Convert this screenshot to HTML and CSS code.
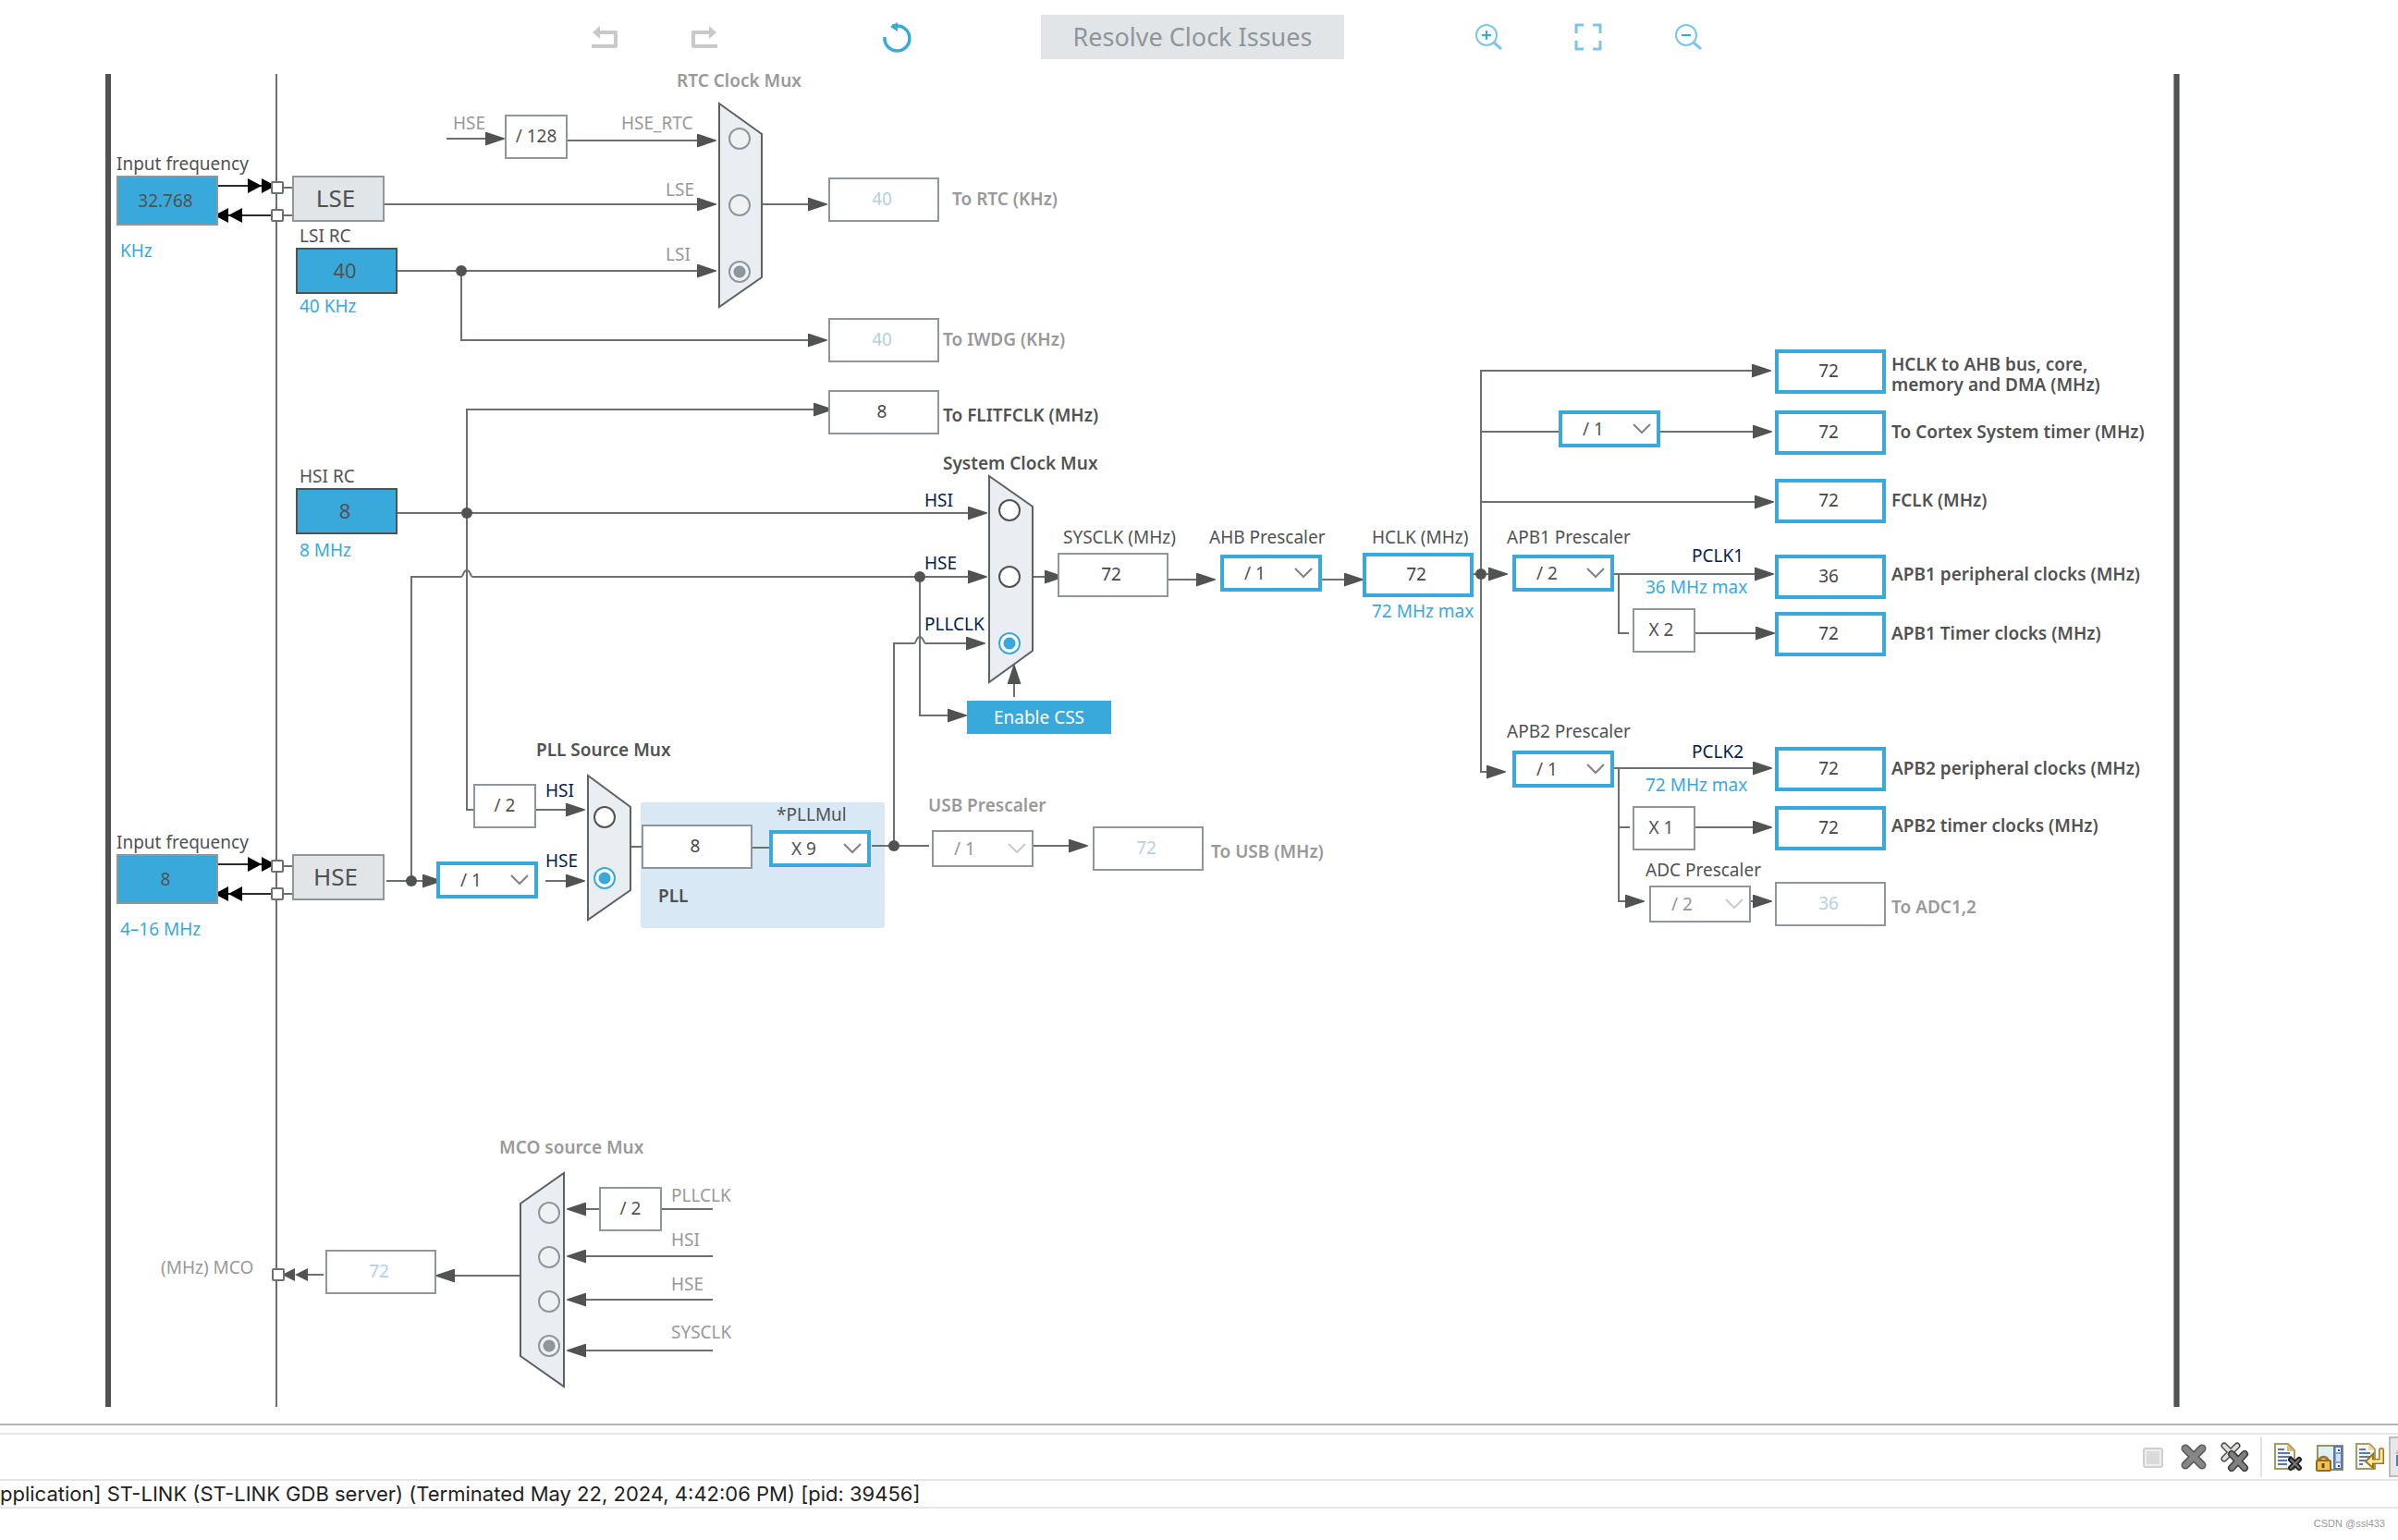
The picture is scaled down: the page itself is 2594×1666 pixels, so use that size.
FILE: index.html
```html
<!DOCTYPE html>
<html lang="en">
<head>
<meta charset="utf-8">
<title>Clock Configuration</title>
<link rel="stylesheet" href="styles.css">
</head>
<body>
<header class="toolbar">
  <div class="tools tools-left">
    <button class="tool" type="button" aria-label="Undo" disabled>
      <svg viewBox="0 0 40 40"><path d="M6 30H32V15H14" fill="none" stroke="#c9c9c9" stroke-width="4" stroke-linejoin="round"/><path d="M7 15L15 8V22z" fill="#c9c9c9"/></svg>
    </button>
    <button class="tool" type="button" aria-label="Redo" disabled>
      <svg viewBox="0 0 40 40"><path d="M34 30H8V15H26" fill="none" stroke="#c9c9c9" stroke-width="4" stroke-linejoin="round"/><path d="M33 15L25 8V22z" fill="#c9c9c9"/></svg>
    </button>
    <button class="tool tool-refresh" type="button" aria-label="Reset">
      <svg viewBox="0 0 40 40"><path d="M7 20A13.500 13.500 0 1 0 20 8H15" fill="none" stroke="#39a9dc" stroke-width="3.500"/><path d="M13 9L21 4V14z" fill="#39a9dc"/></svg>
    </button>
  </div>
  <button class="resolve" type="button" disabled>Resolve Clock Issues</button>
  <div class="tools tools-right">
    <button class="tool" type="button" aria-label="Zoom in">
      <svg viewBox="0 0 40 40" fill="none" stroke="#7cc5e8" stroke-width="2"><circle cx="18" cy="18" r="11"/><path d="M26 26L34 33" stroke-width="3"/><path d="M18 13V23M13 18H23" stroke="#39a9dc"/></svg>
    </button>
    <button class="tool" type="button" aria-label="Fit to window">
      <svg viewBox="0 0 40 40" fill="none" stroke="#7cc5e8" stroke-width="3"><path d="M7 16V7H15M25 7H33V16M33 24V33H25M15 33H7V24"/></svg>
    </button>
    <button class="tool" type="button" aria-label="Zoom out">
      <svg viewBox="0 0 40 40" fill="none" stroke="#7cc5e8" stroke-width="2"><circle cx="18" cy="18" r="11"/><path d="M26 26L34 33" stroke-width="3"/><path d="M13 18H23" stroke="#39a9dc"/></svg>
    </button>
  </div>
</header>

<main class="board">
<div class="diagram">
  <svg class="wires" viewBox="0 80 2360 1442" aria-hidden="true">
    <defs>
      <marker id="arrow" markerUnits="userSpaceOnUse" markerWidth="21" markerHeight="15" refX="21" refY="7.500" orient="auto"><path d="M0 0L21 7V8L0 15z" fill="#505352"/></marker>
      <marker id="pin" markerUnits="userSpaceOnUse" markerWidth="30" markerHeight="16" refX="28" refY="8" orient="auto"><path d="M0 0L15 8L0 16zM15 0L30 8L15 16z" fill="#000"/></marker>
      <marker id="out" markerUnits="userSpaceOnUse" markerWidth="28" markerHeight="14" refX="28" refY="7" orient="auto"><path d="M0 0L14 7L0 14zM14 0L28 7L14 14z" fill="#505352"/></marker>
    </defs>
    <rect x="114" y="80" width="6" height="1442" fill="#505352"/>
    <rect x="2351" y="80" width="7" height="1442" fill="#8f969c"/>
    <rect x="2352" y="80" width="5" height="1442" fill="#505352"/>
    <path class="wire" d="M299 80V1522"/>
    <rect x="693" y="868" width="264" height="136" rx="2" fill="#d9e8f5"/>

    <g class="wire">
      <path d="M306 203H316M306 233H316M306 937H316M306 967H316"/>
      <path d="M416 221H754M430 293H754M614 152H754M483 150H530M824 221H880"/>
      <path d="M499 293V368H880"/>
      <path d="M881 443H505V876H512M430 555H1050"/>
      <path d="M445 953V624H499C501 624 501 617 505 617S509 624 511 624H1050"/>
      <path d="M418 953H460M580 876H615M590 953H615M682 916H694M814 917H832M943 915H1005M1118 915H1160"/>
      <path d="M967 915V696H989C991 696 991 689 995 689S999 696 1001 696H1048M995 624V774H1028"/>
      <path d="M1097 754V738M1117 624H1130M1264 627H1296M1430 627H1455M1594 621H1612"/>
      <path d="M1612 835H1602V401H1896M1602 467H1686M1796 467H1898M1602 543H1900"/>
      <path d="M1746 621H1900M1751 621V685H1762M1834 685H1900"/>
      <path d="M1746 831H1898M1751 831V975H1760M1751 895H1763M1834 895H1898M1894 975H1898"/>
      <path d="M771 1308H716M648 1308H632M771 1359H632M771 1406H632M771 1461H632M563 1380H490M350 1379H330"/>
    </g>
    <g class="wire-in">
      <path d="M236 201H296"/><path d="M293 233H234"/><path d="M236 935H296"/><path d="M293 967H234"/>
    </g>
    <g class="heads">
      <path d="M530 150H546"/><path d="M750 152H775"/><path d="M750 221H775"/><path d="M750 293H775"/>
      <path d="M870 221H895"/><path d="M870 368H895"/><path d="M880 443H901"/>
      <path d="M1046 555H1068"/><path d="M1046 624H1068"/><path d="M1044 696H1066"/><path d="M1024 774H1046"/>
      <path d="M1097 745V719"/><path d="M450 953H478"/><path d="M610 876H633"/><path d="M610 953H633"/>
      <path d="M1154 915H1177"/><path d="M1126 624H1151"/><path d="M1290 627H1315"/><path d="M1450 627H1475"/><path d="M1608 621H1631"/>
      <path d="M1890 401H1916"/><path d="M1890 467H1917"/><path d="M1894 543H1919"/><path d="M1894 621H1919"/><path d="M1894 685H1920"/>
      <path d="M1604 835H1629"/><path d="M1890 831H1917"/><path d="M1890 895H1917"/><path d="M1755 975H1779"/><path d="M1893 975H1917"/>
      <path d="M640 1308H613"/><path d="M640 1359H613"/><path d="M640 1406H613"/><path d="M640 1461H613"/><path d="M500 1380H471"/>
    </g>
    <path d="M340 1379H305" marker-end="url(#out)"/>
    <g fill="#505352">
      <circle cx="499" cy="293" r="6"/><circle cx="505" cy="555" r="6"/><circle cx="445" cy="953" r="6"/><circle cx="995" cy="624" r="6"/><circle cx="967" cy="915" r="6"/><circle cx="1602" cy="621" r="6"/>
    </g>
    <g class="pins">
      <rect x="294" y="197" width="12" height="12" rx="1"/><rect x="294" y="227" width="12" height="12" rx="1"/>
      <rect x="294" y="931" width="12" height="12" rx="1"/><rect x="294" y="961" width="12" height="12" rx="1"/>
      <rect x="295" y="1373" width="12" height="12" rx="1"/>
    </g>
    <g class="mux">
      <path d="M778 112L824 145V300L778 332z"/>
      <path d="M636 839L682 873V963L636 995z"/>
      <path d="M1070 515L1117 548V704L1070 738z"/>
      <path d="M610 1269L563 1302V1467L610 1500z"/>
    </g>
  </svg>

  <!-- RTC -->
  <b class="text muted" style="--x:732;--y:88">RTC Clock Mux</b>
  <span class="text muted" style="--x:490;--y:134">HSE</span>
  <output class="factor" style="--x:546;--y:124">/ 128</output>
  <span class="text muted" style="--x:672;--y:134">HSE_RTC</span>
  <span class="text muted" style="--x:720;--y:206">LSE</span>
  <span class="text muted" style="--x:720;--y:276">LSI</span>
  <input class="radio" type="radio" name="rtc" aria-label="HSE_RTC" disabled style="--x:788;--y:138">
  <input class="radio" type="radio" name="rtc" aria-label="LSE" disabled style="--x:788;--y:210">
  <input class="radio" type="radio" name="rtc" aria-label="LSI" disabled checked style="--x:788;--y:282">
  <input class="field off" id="rtc" value="40" disabled style="--x:896;--y:192">
  <label class="text muted strong" for="rtc" style="--x:1030;--y:216">To RTC (KHz)</label>
  <input class="field off" id="iwdg" value="40" disabled style="--x:896;--y:344">
  <label class="text muted strong" for="iwdg" style="--x:1020;--y:368">To IWDG (KHz)</label>
  <input class="field" id="flitf" value="8" readonly style="--x:896;--y:422">
  <label class="text strong" for="flitf" style="--x:1020;--y:450">To FLITFCLK (MHz)</label>

  <!-- Oscillators -->
  <label class="text" for="lse-in" style="--x:126;--y:178">Input frequency</label>
  <input class="source" id="lse-in" value="32.768" style="--x:126;--y:190">
  <span class="text hint" style="--x:130;--y:272">KHz</span>
  <button class="osc" type="button" style="--x:316;--y:190">LSE</button>
  <label class="text" for="lsi" style="--x:324;--y:256">LSI RC</label>
  <input class="source internal" id="lsi" value="40" readonly style="--x:320;--y:268">
  <span class="text hint" style="--x:324;--y:332">40 KHz</span>
  <label class="text" for="hsi" style="--x:324;--y:516">HSI RC</label>
  <input class="source internal" id="hsi" value="8" readonly style="--x:320;--y:528">
  <span class="text hint" style="--x:324;--y:596">8 MHz</span>
  <label class="text" for="hse-in" style="--x:126;--y:912">Input frequency</label>
  <input class="source" id="hse-in" value="8" style="--x:126;--y:924">
  <span class="text hint" style="--x:130;--y:1006">4–16 MHz</span>
  <button class="osc" type="button" style="--x:316;--y:924">HSE</button>

  <!-- PLL -->
  <b class="text" style="--x:580;--y:812">PLL Source Mux</b>
  <span class="text signal" style="--x:590;--y:856">HSI</span>
  <span class="text signal" style="--x:590;--y:932">HSE</span>
  <output class="factor" style="--x:512;--y:848">/ 2</output>
  <select class="combo" aria-label="HSE divider" style="--x:472;--y:932"><option>/ 1</option></select>
  <input class="radio" type="radio" name="pll" aria-label="HSI" style="--x:642;--y:872">
  <input class="radio" type="radio" name="pll" aria-label="HSE" checked style="--x:642;--y:938">
  <input class="field" id="pll" value="8" readonly style="--x:694;--y:892">
  <label class="text" for="mul" style="--x:840;--y:882">*PLLMul</label>
  <select class="combo times" id="mul" style="--x:832;--y:898"><option>X 9</option></select>
  <label class="text strong" for="pll" style="--x:712;--y:970">PLL</label>
  <label class="text muted strong" for="usb-div" style="--x:1004;--y:872">USB Prescaler</label>
  <select class="combo" id="usb-div" disabled style="--x:1008;--y:898"><option>/ 1</option></select>
  <input class="field off" id="usb" value="72" disabled style="--x:1182;--y:894">
  <label class="text muted strong" for="usb" style="--x:1310;--y:922">To USB (MHz)</label>

  <!-- System clock -->
  <b class="text" style="--x:1020;--y:502">System Clock Mux</b>
  <span class="text signal" style="--x:1000;--y:542">HSI</span>
  <span class="text signal" style="--x:1000;--y:610">HSE</span>
  <span class="text signal" style="--x:1000;--y:676">PLLCLK</span>
  <input class="radio" type="radio" name="sys" aria-label="HSI" style="--x:1080;--y:540">
  <input class="radio" type="radio" name="sys" aria-label="HSE" style="--x:1080;--y:612">
  <input class="radio" type="radio" name="sys" aria-label="PLLCLK" checked style="--x:1080;--y:684">
  <button class="css-enable" type="button" style="--x:1046;--y:758">Enable CSS</button>
  <label class="text" for="sysclk" style="--x:1150;--y:582">SYSCLK (MHz)</label>
  <input class="field" id="sysclk" value="72" readonly style="--x:1144;--y:598">
  <label class="text" for="ahb" style="--x:1308;--y:582">AHB Prescaler</label>
  <select class="combo" id="ahb" style="--x:1320;--y:600"><option>/ 1</option></select>
  <label class="text" for="hclk" style="--x:1484;--y:582">HCLK (MHz)</label>
  <input class="field live" id="hclk" value="72" style="--x:1474;--y:598">
  <span class="text hint" style="--x:1484;--y:662">72 MHz max</span>

  <!-- Buses -->
  <input class="field live" id="o-hclk" value="72" style="--x:1920;--y:378">
  <label class="text strong two-line" for="o-hclk" style="--x:2046;--y:396">HCLK to AHB bus, core,<br>memory and DMA (MHz)</label>
  <select class="combo" aria-label="Cortex timer divider" style="--x:1686;--y:444"><option>/ 1</option></select>
  <input class="field live" id="cortex" value="72" style="--x:1920;--y:444">
  <label class="text strong" for="cortex" style="--x:2046;--y:468">To Cortex System timer (MHz)</label>
  <input class="field live" id="fclk" value="72" style="--x:1920;--y:518">
  <label class="text strong" for="fclk" style="--x:2046;--y:542">FCLK (MHz)</label>

  <label class="text" for="apb1" style="--x:1630;--y:582">APB1 Prescaler</label>
  <select class="combo" id="apb1" style="--x:1636;--y:600"><option>/ 2</option></select>
  <span class="text signal" style="--x:1830;--y:602">PCLK1</span>
  <span class="text hint" style="--x:1780;--y:636">36 MHz max</span>
  <input class="field live" id="apb1-p" value="36" style="--x:1920;--y:600">
  <label class="text strong" for="apb1-p" style="--x:2046;--y:622">APB1 peripheral clocks (MHz)</label>
  <output class="factor times" style="--x:1766;--y:658">X 2</output>
  <input class="field live" id="apb1-t" value="72" style="--x:1920;--y:662">
  <label class="text strong" for="apb1-t" style="--x:2046;--y:686">APB1 Timer clocks (MHz)</label>

  <label class="text" for="apb2" style="--x:1630;--y:792">APB2 Prescaler</label>
  <select class="combo" id="apb2" style="--x:1636;--y:812"><option>/ 1</option></select>
  <span class="text signal" style="--x:1830;--y:814">PCLK2</span>
  <span class="text hint" style="--x:1780;--y:850">72 MHz max</span>
  <input class="field live" id="apb2-p" value="72" style="--x:1920;--y:808">
  <label class="text strong" for="apb2-p" style="--x:2046;--y:832">APB2 peripheral clocks (MHz)</label>
  <output class="factor times" style="--x:1766;--y:872">X 1</output>
  <input class="field live" id="apb2-t" value="72" style="--x:1920;--y:872">
  <label class="text strong" for="apb2-t" style="--x:2046;--y:894">APB2 timer clocks (MHz)</label>
  <label class="text" for="adc-div" style="--x:1780;--y:942">ADC Prescaler</label>
  <select class="combo" id="adc-div" disabled style="--x:1784;--y:958"><option>/ 2</option></select>
  <input class="field off" id="adc" value="36" disabled style="--x:1920;--y:954">
  <label class="text muted strong" for="adc" style="--x:2046;--y:982">To ADC1,2</label>

  <!-- MCO -->
  <b class="text muted" style="--x:540;--y:1242">MCO source Mux</b>
  <input class="radio" type="radio" name="mco" aria-label="PLLCLK" disabled style="--x:582;--y:1300">
  <input class="radio" type="radio" name="mco" aria-label="HSI" disabled style="--x:582;--y:1348">
  <input class="radio" type="radio" name="mco" aria-label="HSE" disabled style="--x:582;--y:1396">
  <input class="radio" type="radio" name="mco" aria-label="SYSCLK" disabled checked style="--x:582;--y:1444">
  <output class="factor" style="--x:648;--y:1284">/ 2</output>
  <span class="text muted" style="--x:726;--y:1294">PLLCLK</span>
  <span class="text muted" style="--x:726;--y:1342">HSI</span>
  <span class="text muted" style="--x:726;--y:1390">HSE</span>
  <span class="text muted" style="--x:726;--y:1442">SYSCLK</span>
  <label class="text muted" for="mco" style="--x:174;--y:1372">(MHz) MCO</label>
  <input class="field off" id="mco" value="72" disabled style="--x:352;--y:1352">
</div>
</main>

<footer class="console">
  <div class="console-bar">
    <div class="console-tools">
      <button class="icon" type="button" aria-label="Terminate" disabled>
        <svg viewBox="0 0 32 32"><rect x="6" y="7" width="20" height="20" rx="2" fill="#eee" stroke="#cfcfcf" stroke-width="2"/><rect x="9" y="10" width="14" height="14" fill="#dadada"/></svg>
      </button>
      <button class="icon" type="button" aria-label="Remove launch">
        <svg viewBox="0 0 32 32"><path d="M7 7L25 25M25 7L7 25" stroke="#5a5a5a" stroke-width="9" stroke-linecap="round"/><path d="M7 7L25 25M25 7L7 25" stroke="#868686" stroke-width="6" stroke-linecap="round"/></svg>
      </button>
      <button class="icon" type="button" aria-label="Remove all terminated launches">
        <svg viewBox="0 0 32 32"><g stroke-linecap="round"><path d="M5 4L19 18M19 4L5 18" stroke="#4c4c44" stroke-width="7"/><path d="M5 4L19 18M19 4L5 18" stroke="#dcdcdc" stroke-width="4"/><path d="M13 13L27 28M27 13L13 28" stroke="#3c3c3c" stroke-width="8"/><path d="M13 13L27 28M27 13L13 28" stroke="#808080" stroke-width="5"/></g></svg>
      </button>
      <span class="divider"></span>
      <button class="icon" type="button" aria-label="Clear console">
        <svg viewBox="0 0 32 32"><path d="M2 2H16L23 9V29H2z" fill="#f4f8fd" stroke="#a89a5e" stroke-width="2"/><path d="M15 2V10H23z" fill="#e2bd72"/><path d="M5 8H12M5 12H18M5 16H20M5 20H15M5 24H15" stroke="#5a78b8" stroke-width="2"/><path d="M19 19L28 28M28 19L19 28" stroke="#222" stroke-width="6" stroke-linecap="round"/><path d="M19 19L28 28M28 19L19 28" stroke="#777" stroke-width="2" stroke-linecap="round"/></svg>
      </button>
      <button class="icon" type="button" aria-label="Scroll lock">
        <svg viewBox="0 0 32 32"><path d="M4 4H31V30H4z" fill="#dff0fb" stroke="#9c9458" stroke-width="2"/><path d="M22 5H30V29H22z" fill="#8aa4cc" stroke="#5878b0" stroke-width="2"/><path d="M24 6H29V11H24zM24 23H29V28H24z" fill="#fff"/><path d="M26 8H28V10H26zM26 25H28V27H26z" fill="#2c4f94"/><path d="M24 13H29V21H24z" fill="#cfe0f4"/><path d="M6 22V19A5 5 0 0 1 15 19V22" fill="none" stroke="#9a7a28" stroke-width="3"/><rect x="3" y="20" width="15" height="11" rx="1" fill="#eec458" stroke="#9a6a10" stroke-width="2"/><path d="M10 23V28" stroke="#6a4a10" stroke-width="3"/></svg>
      </button>
      <button class="icon" type="button" aria-label="Word wrap">
        <svg viewBox="0 0 32 32"><path d="M2 2H16L22 8V29H2z" fill="#f4f8fd" stroke="#a89a5e" stroke-width="2"/><path d="M15 2V9H22z" fill="#f0d9a8"/><path d="M5 8H12M5 12H17M5 16H17M5 20H12M5 24H9" stroke="#5a78b8" stroke-width="2"/><path d="M29 9V21H16" fill="none" stroke="#a8740c" stroke-width="6" stroke-linecap="round"/><path d="M20 13V28L12 21z" fill="#ffe9a8" stroke="#a8740c" stroke-width="2"/><path d="M29 9V21H17" fill="none" stroke="#ffe9a8" stroke-width="3" stroke-linecap="round"/></svg>
      </button>
    </div>
    <button class="icon pressed" type="button" aria-label="Show console on output">
      <svg viewBox="0 0 32 32"><path d="M12 0V13H5z" fill="#bdbdbd"/><path d="M6 14H20V26H6z" fill="#4a82b8"/></svg>
    </button>
  </div>
  <p class="console-title">pplication] ST-LINK (ST-LINK GDB server) (Terminated May 22, 2024, 4:42:06 PM) [pid: 39456]</p>
  <div class="console-body"><span class="credit">CSDN @ssl433</span></div>
</footer>
</body>
</html>
```
FILE: styles.css
```css
* { box-sizing: border-box; }

body {
  margin: 0;
  min-height: 100vh;
  display: flex;
  flex-direction: column;
  overflow-x: hidden;
  background: #fff;
  color: #505352;
  font: 19px/24px "Noto Sans", sans-serif;
}

button, input, select {
  font: inherit;
  color: inherit;
  margin: 0;
  padding: 0;
  border-radius: 0;
}

/* Toolbar */
.toolbar {
  height: 80px;
  padding-right: 14px;
  display: grid;
  grid-template-columns: 1fr auto 1fr;
  align-items: center;
  column-gap: 136px;
}
.tools { display: flex; gap: 68px; }
.tools-left { justify-content: flex-end; }
.tool {
  width: 40px;
  height: 40px;
  border: 0;
  background: none;
}
.tool svg { display: block; width: 40px; height: 40px; }
.tool-refresh { margin-left: 100px; }
.resolve {
  width: 328px;
  height: 48px;
  border: 0;
  background: #e1e5e8;
  color: #8f969b;
  font-size: 27px;
}

/* Clock tree: a free canvas whose units start at y = 80 */
.board { flex: 1; }
.diagram { position: relative; width: 2360px; height: 1442px; }
.wires { display: block; width: 100%; height: 100%; }
.wire { fill: none; stroke: #6b7071; stroke-width: 2; }
.wire-in path { stroke: #2b2b2b; stroke-width: 2; marker-end: url(#pin); }
.heads path { marker-end: url(#arrow); }
.pins rect { fill: #fff; stroke: #6b7071; stroke-width: 2; }
.mux path { fill: #eaeef2; stroke: #5c6163; stroke-width: 2; }

.diagram > :not(svg) {
  position: absolute;
  left: calc(var(--x) * 1px);
  top: calc((var(--y) - 80) * 1px);
}
.text { margin-top: -13px; white-space: nowrap; }
.strong, b.text { font-weight: 600; }
.two-line { line-height: 22px; }
.muted { color: #999; }
.hint { color: #39a9dc; }
.signal { color: #03234b; }

.field {
  width: 120px;
  height: 48px;
  padding: 0 4px 2px 0;
  border: 2px solid #8f969c;
  background: #fff;
  color: #444746;
  text-align: center;
}
.field.live { border: 4px solid #39a9dc; }
.field.off { color: #b4cfe8; }

.source {
  width: 110px;
  height: 54px;
  padding-right: 4px;
  border: 2px solid #8f969c;
  background: #39a9dc;
  text-align: center;
}
.source.internal { height: 50px; padding-bottom: 2px; border-color: #505352; font-size: 22px; }

.osc {
  width: 100px;
  height: 50px;
  padding: 0 6px 2px 0;
  border: 2px solid #8f969c;
  background: #e1e5e8;
  font-size: 26px;
}

.factor {
  width: 68px;
  height: 48px;
  border: 2px solid #8f969c;
  background: #fff;
  line-height: 42px;
  text-align: center;
}
.factor.times { padding-right: 6px; }

.combo {
  appearance: none;
  width: 110px;
  height: 40px;
  padding-left: 22px;
  border: 4px solid #39a9dc;
  background: #fff url("data:image/svg+xml,%3Csvg xmlns='http://www.w3.org/2000/svg' width='20' height='12'%3E%3Cpath d='M1 1L10 10L19 1' fill='none' stroke='%23808384' stroke-width='2'/%3E%3C/svg%3E") no-repeat right 6px center;
}
.combo.times { padding-left: 20px; }
.combo:disabled {
  padding-left: 22px;
  border: 2px solid #8f969c;
  color: #8f969c;
  opacity: 1;
  background-image: url("data:image/svg+xml,%3Csvg xmlns='http://www.w3.org/2000/svg' width='20' height='12'%3E%3Cpath d='M1 1L10 10L19 1' fill='none' stroke='%23c8cacb' stroke-width='2'/%3E%3C/svg%3E");
}

.radio {
  appearance: none;
  width: 24px;
  height: 24px;
  border: 2px solid #505352;
  border-radius: 50%;
  background: #fff;
}
.radio:checked {
  border-color: #39a9dc;
  background: radial-gradient(circle, #39a9dc 6px, #fff 7px);
}
.radio:disabled { border-color: #8f969c; background: #f0f1f3; }
.radio:disabled:checked { background: radial-gradient(circle, #8f969c 6px, #f0f1f3 7px); }

.css-enable {
  width: 156px;
  height: 36px;
  border: 0;
  background: #39a9dc;
  color: #fff;
}

/* Console */
.console { border-top: 2px solid #b4b4b4; }
.console-bar {
  margin-top: 8px;
  height: 52px;
  border-top: 2px solid #e6e6e6;
  border-bottom: 2px solid #e6e6e6;
  display: flex;
  justify-content: flex-end;
  align-items: center;
  gap: 5px;
  overflow: hidden;
}
.console-tools { display: flex; align-items: center; gap: 12px; }
.icon {
  flex: none;
  width: 32px;
  height: 32px;
  border: 0;
  background: none;
}
.icon svg { display: block; width: 32px; height: 32px; }
.divider { width: 2px; height: 44px; background: #e3e3e3; }
.icon.pressed {
  width: 44px;
  height: 44px;
  margin-right: -34px;
  border: 2px solid #bbb;
  background: #e8e8e8;
}
.console-title {
  margin: 0;
  height: 30px;
  border-bottom: 2px solid #e6e6e6;
  font: 22px/28px Inter, sans-serif;
  color: #222;
  white-space: nowrap;
}
.console-body { height: 34px; padding-right: 14px; display: flex; justify-content: flex-end; align-items: center; }
.credit { font: 11px/16px "Liberation Sans", sans-serif; color: #999; padding-bottom: 2px; }
```
